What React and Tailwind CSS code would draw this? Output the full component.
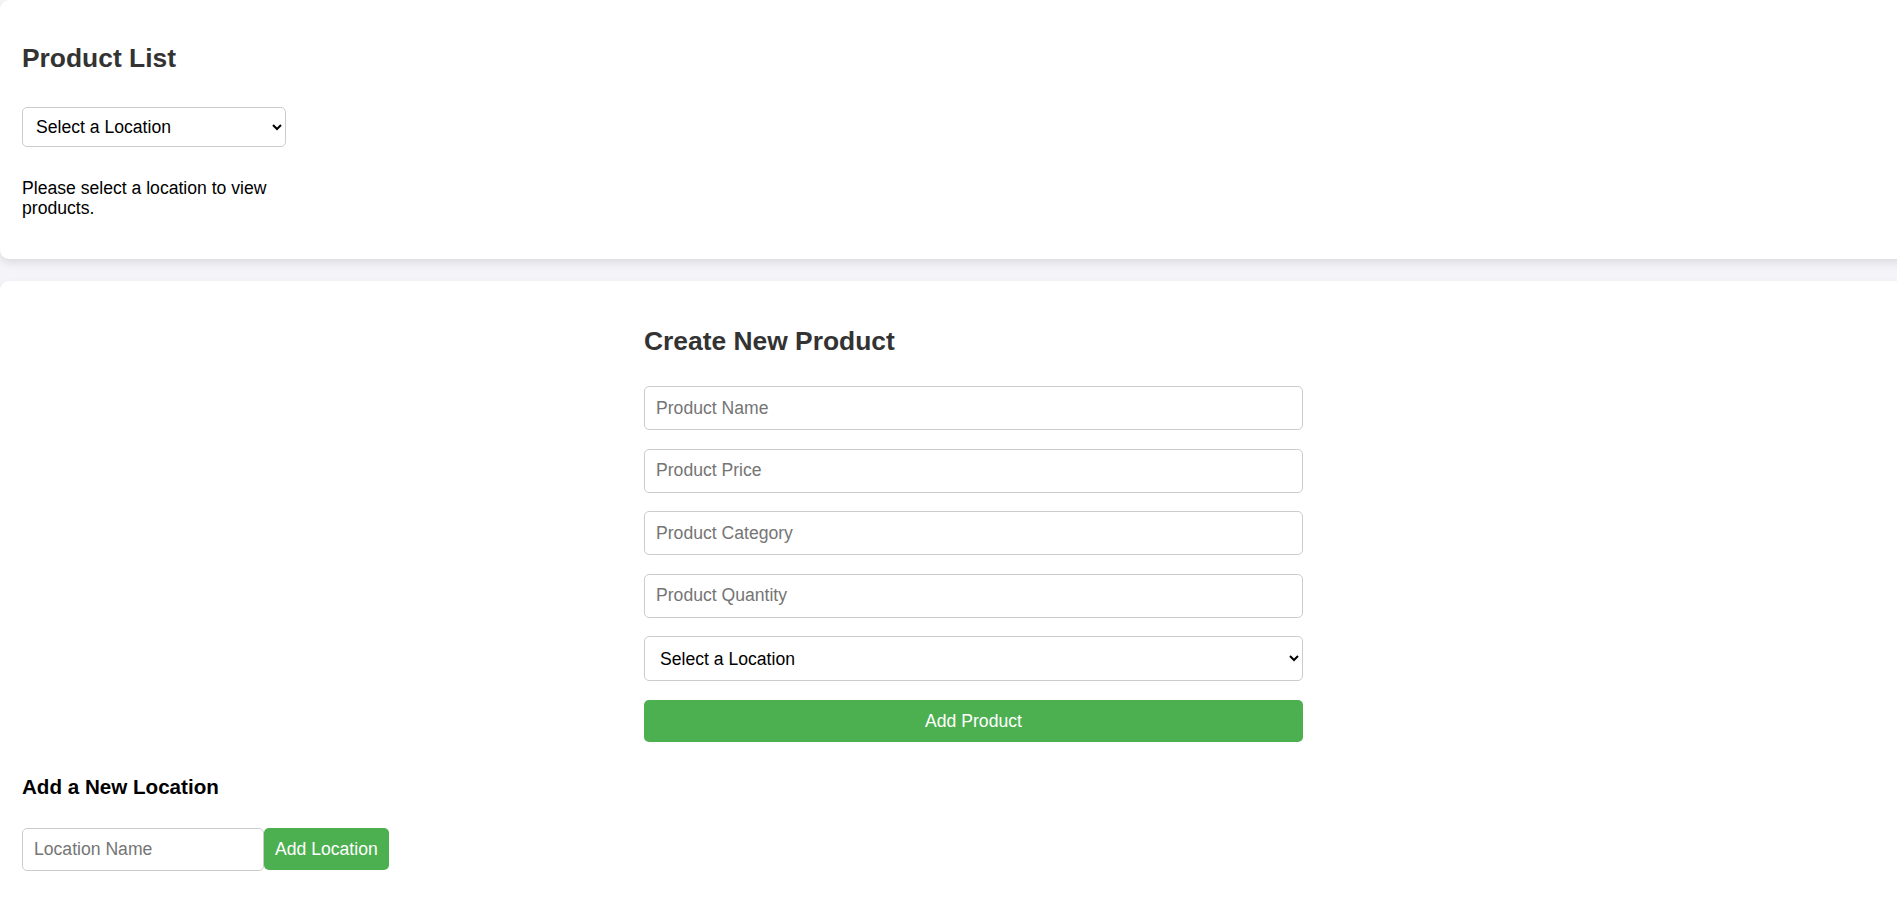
import { useState } from "react";

const font = { fontFamily: '"Liberation Sans", Arial, sans-serif' };

const ProductList = ({ locations }) => {
  const [location, setLocation] = useState("");

  return (
    <section className="w-[1947px] rounded-[9px] bg-white px-[22px] pt-[43px] pb-[41px] shadow-[0_4px_9px_rgba(0,0,0,0.1)]">
      <div className="w-[264px]">
        <h2 className="text-[26.4px] leading-[30px] font-bold text-[#333]">Product List</h2>
        <select
          value={location}
          onChange={(e) => setLocation(e.target.value)}
          className="mt-[34px] h-[40px] w-[264px] rounded-[5px] border border-[#ccc] bg-white pl-[9px] pr-[6px] text-[17.6px] text-black"
        >
          <option value="">Select a Location</option>
          {locations.map((loc) => (
            <option key={loc} value={loc}>
              {loc}
            </option>
          ))}
        </select>
        <p className="mt-[31px] text-[17.6px] leading-[20.2px] text-black">
          Please select a location to view products.
        </p>
      </div>
    </section>
  );
};

const CreateProduct = ({ locations }) => {
  const fields = ["Product Name", "Product Price", "Product Category", "Product Quantity"];

  return (
    <form className="mx-auto flex w-[659px] flex-col" onSubmit={(e) => e.preventDefault()}>
      <h2 className="text-[26.4px] leading-[30px] font-bold text-[#333]">Create New Product</h2>
      <div className="mt-[30.5px] flex flex-col gap-[18.5px]">
        {fields.map((f) => (
          <input
            key={f}
            type="text"
            placeholder={f}
            className="h-[44px] w-full rounded-[5px] border border-[#ccc] bg-white px-[11px] text-[17.6px] text-black placeholder:text-[#757575] outline-none"
          />
        ))}
        <select className="h-[45px] w-full rounded-[5px] border border-[#ccc] bg-white pl-[11px] pr-[6px] text-[17.6px] text-black">
          <option value="">Select a Location</option>
          {locations.map((loc) => (
            <option key={loc} value={loc}>
              {loc}
            </option>
          ))}
        </select>
        <button
          type="submit"
          className="h-[42px] w-full rounded-[5px] bg-[#4caf50] text-[17.6px] text-white"
        >
          Add Product
        </button>
      </div>
    </form>
  );
};

const AddLocation = () => {
  const [name, setName] = useState("");

  return (
    <div className="mt-[33px]">
      <h3 className="text-[20.6px] leading-[24px] font-bold text-black">Add a New Location</h3>
      <div className="mt-[29px] flex items-center">
        <input
          type="text"
          value={name}
          onChange={(e) => setName(e.target.value)}
          placeholder="Location Name"
          className="h-[43px] w-[242px] rounded-[5px] border border-[#ccc] bg-white px-[11px] text-[17.6px] text-black placeholder:text-[#757575] outline-none"
        />
        <button className="h-[42px] rounded-[5px] bg-[#4caf50] px-[11px] text-[17.6px] text-white">
          Add Location
        </button>
      </div>
    </div>
  );
};

export default function App() {
  const locations = ["Warehouse A", "Warehouse B", "Downtown Store"];

  return (
    <div className="h-screen overflow-hidden bg-[#f4f4f9]" style={font}>
      <ProductList locations={locations} />
      <section className="mt-[22px] w-[1947px] rounded-[9px] bg-white px-[22px] pt-[44.5px] pb-[40px] shadow-[0_4px_9px_rgba(0,0,0,0.1)]">
        <CreateProduct locations={locations} />
        <AddLocation />
      </section>
    </div>
  );
}
